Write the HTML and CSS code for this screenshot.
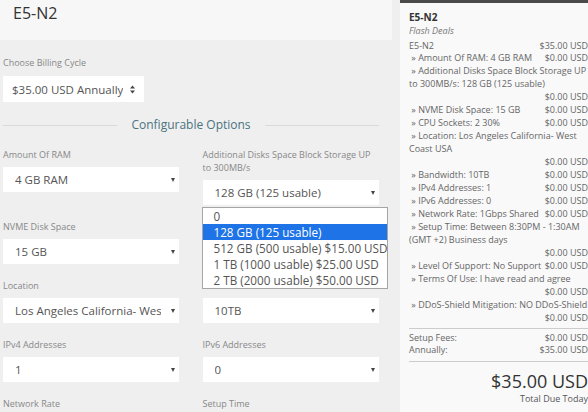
FILE: index.html
```html
<!DOCTYPE html>
<html>
<head>
<meta charset="utf-8">
<link rel="stylesheet" href="styles.css">
</head>
<body>
<div class="page">
  <div class="main">
    <div class="page-header"><h1>E5-N2</h1></div>
    <div class="content">
      <div class="billing">
        <label class="lbl">Choose Billing Cycle</label>
        <div class="select select-billing">
          <span>$35.00 USD Annually</span>
          <svg class="updown" width="5" height="9" viewBox="0 0 5 9"><path d="M0 3.5 L2.5 0.5 L5 3.5 Z M0 5.5 L2.5 8.5 L5 5.5 Z" fill="#444"/></svg>
        </div>
      </div>
      <div class="section-title"><span class="line"></span><span class="title">Configurable Options</span><span class="line"></span></div>
      <div class="options-grid">
        <div class="field">
          <label class="lbl">Amount Of RAM</label>
          <div class="select"><span>4 GB RAM</span><i class="caret"></i></div>
        </div>
        <div class="field">
          <label class="lbl">Additional Disks Space Block Storage UP to 300MB/s</label>
          <div class="select-wrap">
            <div class="select"><span>128 GB (125 usable)</span><i class="caret"></i></div>
            <ul class="dropdown">
              <li>0</li>
              <li class="active">128 GB (125 usable)</li>
              <li>512 GB (500 usable) $15.00 USD</li>
              <li>1 TB (1000 usable) $25.00 USD</li>
              <li>2 TB (2000 usable) $50.00 USD</li>
            </ul>
          </div>
        </div>
        <div class="field">
          <label class="lbl">NVME Disk Space</label>
          <div class="select"><span>15 GB</span><i class="caret"></i></div>
        </div>
        <div class="field covered">
          <label class="lbl">CPU Sockets</label>
          <div class="select"><span>2 30%</span><i class="caret"></i></div>
        </div>
        <div class="field">
          <label class="lbl">Location</label>
          <div class="select"><span class="clip">Los Angeles California- West Coast USA</span><i class="caret"></i></div>
        </div>
        <div class="field">
          <label class="lbl covered">Bandwidth</label>
          <div class="select"><span>10TB</span><i class="caret"></i></div>
        </div>
        <div class="field">
          <label class="lbl">IPv4 Addresses</label>
          <div class="select"><span>1</span><i class="caret"></i></div>
        </div>
        <div class="field">
          <label class="lbl">IPv6 Addresses</label>
          <div class="select"><span>0</span><i class="caret"></i></div>
        </div>
        <div class="field">
          <label class="lbl">Network Rate</label>
          <div class="select"><span>1Gbps Shared</span><i class="caret"></i></div>
        </div>
        <div class="field">
          <label class="lbl">Setup Time</label>
          <div class="select"><span>Between 8:30PM - 1:30AM</span><i class="caret"></i></div>
        </div>
      </div>
    </div>
  </div>
  <aside class="summary">
    <div class="sum-title">E5-N2</div>
    <div class="sum-group">Flash Deals</div>
    <div class="items">
      <div class="item"><span class="name">E5-N2</span><span class="price">$35.00 USD</span></div>
      <div class="item"><span class="name">&nbsp;» Amount Of RAM: 4 GB RAM</span><span class="price">$0.00 USD</span></div>
      <div class="item"><span class="name">&nbsp;» Additional Disks Space Block Storage UP to 300MB/s: 128 GB (125 usable)</span><span class="price">$0.00 USD</span></div>
      <div class="item"><span class="name">&nbsp;» NVME Disk Space: 15 GB</span><span class="price">$0.00 USD</span></div>
      <div class="item"><span class="name">&nbsp;» CPU Sockets: 2 30%</span><span class="price">$0.00 USD</span></div>
      <div class="item"><span class="name">&nbsp;» Location: Los Angeles California- West Coast USA</span><span class="price">$0.00 USD</span></div>
      <div class="item"><span class="name">&nbsp;» Bandwidth: 10TB</span><span class="price">$0.00 USD</span></div>
      <div class="item"><span class="name">&nbsp;» IPv4 Addresses: 1</span><span class="price">$0.00 USD</span></div>
      <div class="item"><span class="name">&nbsp;» IPv6 Addresses: 0</span><span class="price">$0.00 USD</span></div>
      <div class="item"><span class="name">&nbsp;» Network Rate: 1Gbps Shared</span><span class="price">$0.00 USD</span></div>
      <div class="item"><span class="name">&nbsp;» Setup Time: Between 8:30PM - 1:30AM (GMT +2) Business days</span><span class="price">$0.00 USD</span></div>
      <div class="item"><span class="name">&nbsp;» Level Of Support: No Support</span><span class="price">$0.00 USD</span></div>
      <div class="item"><span class="name">&nbsp;» Terms Of Use: I have read and agree</span><span class="price">$0.00 USD</span></div>
      <div class="item"><span class="name">&nbsp;» DDoS-Shield Mitigation: NO DDoS-Shield</span><span class="price">$0.00 USD</span></div>
    </div>
    <div class="totals">
      <div class="item"><span class="name">Setup Fees:</span><span class="price">$0.00 USD</span></div>
      <div class="item"><span class="name">Annually:</span><span class="price">$35.00 USD</span></div>
    </div>
    <div class="total-due">
      <div class="amount">$35.00 USD</div>
      <div class="due-label">Total Due Today</div>
    </div>
  </aside>
</div>
</body>
</html>
```

FILE: styles.css
```css
* { box-sizing: border-box; }
html, body { margin: 0; padding: 0; overflow: hidden; }
body {
  font-family: "Open Sans", "Liberation Sans", sans-serif;
  background: #efefef;
  color: #555;
  width: 588px;
  height: 412px;
}
.page { display: flex; align-items: flex-start; height: 412px; overflow: hidden; }
.main { width: 392px; flex: none; }
.page-header { height: 40px; background: #f7f7f7; padding: 2px 0 0 13px; }
.page-header h1 { margin: 0; font-size: 16px; font-weight: 400; line-height: 22px; color: #333; }
.content { padding: 0 13px 0 3px; }
.lbl { display: block; font-size: 9px; line-height: 13px; color: #888; }
.billing { margin-top: 15.5px; }
.billing .lbl { margin-bottom: 7.5px; }
.select {
  background: #fff;
  height: 25px;
  display: flex;
  align-items: center;
  justify-content: space-between;
  padding: 0 4px 0 12px;
  font-size: 11.5px;
  color: #555;
  white-space: nowrap;
  overflow: hidden;
}
.select span { overflow: hidden; text-overflow: clip; }
.select .clip { width: 146px; }
.select-billing { width: 141px; height: 26px; padding: 0 9px 0 9px; }
.updown { flex: none; }
.caret {
  flex: none;
  width: 0; height: 0;
  border-left: 2.5px solid transparent;
  border-right: 2.5px solid transparent;
  border-top: 4px solid #444;
}
.section-title { display: flex; align-items: center; gap: 14px; margin-top: 15px; height: 16px; }
.section-title .line { flex: 1; height: 1px; background: #dadada; }
.section-title .title { font-size: 12px; color: #4a7380; line-height: 16px; }
.options-grid {
  margin-top: 14.5px;
  display: grid;
  grid-template-columns: 176px 176px;
  column-gap: 23.5px;
  row-gap: 14.5px;
  align-items: start;
}
.field .lbl { margin-bottom: 6.5px; }
.covered { visibility: hidden; }
.select-wrap { position: relative; }
.dropdown {
  position: absolute;
  top: calc(100% + 2px);
  left: -1px;
  width: 186px;
  margin: 0;
  padding: 0;
  list-style: none;
  background: #fff;
  border: 1px solid #a5a5a5;
  z-index: 2;
}
.dropdown li {
  height: 16px;
  line-height: 16px;
  font-size: 11.7px;
  color: #555;
  padding-left: 11px;
  white-space: nowrap;
}
.dropdown li.active { background: #1e73e6; color: #fff; }

.summary {
  margin-left: 8px;
  width: 188px;
  height: 412px;
  flex: none;
  background: #f9f9f9;
  border-top: 3px solid #4b4b4b;
  padding: 7.5px 0 0 9px;
  font-size: 9px;
  line-height: 12.95px;
  color: #666;
}
.sum-title { font-size: 10px; font-weight: 700; color: #333; line-height: 13px; }
.sum-group { font-style: italic; color: #777; line-height: 13px; }
.items { margin-top: 3px; padding-bottom: 4px; border-bottom: 1px solid #ccc; }
.item { display: flex; flex-wrap: wrap; justify-content: space-between; }
.item .price { margin-left: auto; white-space: nowrap; }
.totals { padding: 2.5px 0 4.5px; border-bottom: 1px solid #ccc; line-height: 12.2px; }
.total-due { text-align: right; padding-top: 8px; }
.amount { font-size: 18px; line-height: 22px; color: #333; }
.due-label { font-size: 9px; line-height: 13px; color: #555; }
```
